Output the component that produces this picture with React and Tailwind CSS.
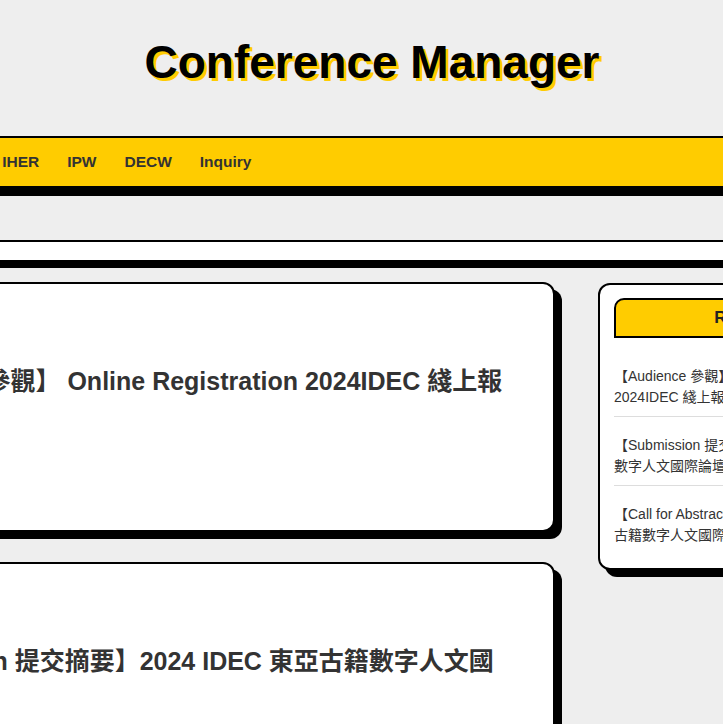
import React from "react";

// Navigation links of the top bar (the first two lie left of the visible area)
const navItems = ["Home", "IDEC", "IHER", "IPW", "DECW", "Inquiry"];

// Posts shown as big cards in the main column
const posts = [
  "【Audience 參觀】 Online Registration 2024IDEC 綫上報",
  "【Submission 提交摘要】2024 IDEC 東亞古籍數字人文國",
];

// Posts listed in the sidebar
const recentPosts = [
  "【Audience 參觀】 Online Registration 2024IDEC 綫上報名",
  "【Submission 提交摘要】2024 IDEC 東亞古籍數字人文國際論壇",
  "【Call for Abstracts 徵稿啟事】2024 IDEC 東亞古籍數字人文國際論壇",
];

const font = "font-['Liberation_Sans','Noto_Sans_CJK_TC',sans-serif]";

const App = () => {
  return (
    <div className={`min-h-screen overflow-hidden bg-[#eeeeee] ${font}`}>
      {/* Page is wider than the window, shifted left */}
      <div className="w-[1400px] ml-[-328px]">
        {/* Title */}
        <header className="pt-[36px] pb-[47px] text-center">
          <h1 className="text-[46px] leading-[53px] font-bold text-black [text-shadow:3px_3px_0_#ffcc00]">
            Conference Manager
          </h1>
        </header>

        {/* Navigation bar */}
        <nav className="h-[52px] flex items-center gap-[28px] pl-[192px] bg-[#ffcc00] border-2 border-black shadow-[0_8px_0_#000]">
          {navItems.map((item) => (
            <a
              key={item}
              href="#"
              className="text-[15.5px] font-bold text-[#333]"
            >
              {item}
            </a>
          ))}
        </nav>

        {/* Search bar */}
        <div className="mt-[52px] h-[22px] bg-white border-2 border-black shadow-[0_6px_0_#000]"></div>

        {/* Main content + sidebar */}
        <div className="mt-[20px] px-[134px] flex items-start gap-[43px]">
          {/* Post cards */}
          <div className="w-[749px] flex flex-col gap-[30px]">
            {posts.map((post) => (
              <div
                key={post}
                className="h-[250px] bg-white border-2 border-black rounded-[12px] shadow-[7px_7px_0_#000] pl-[33px] pt-[79px]"
              >
                <h2 className="text-[25px] leading-[36px] font-bold text-[#333] whitespace-nowrap">
                  {post}
                </h2>
              </div>
            ))}
          </div>

          {/* Sidebar */}
          <aside className="mt-[1px] w-[340px] bg-white border-2 border-black rounded-[12px] shadow-[7px_7px_0_#000] px-[14px] pt-[13px] pb-[14px]">
            <div className="h-[40px] flex items-center justify-center bg-[#ffcc00] border-2 border-black rounded-t-[10px]">
              <h3 className="text-[17px] font-bold text-[#222]">Recent Posts</h3>
            </div>
            <ul className="mt-[20px]">
              {recentPosts.map((post, i) => (
                <li
                  key={post}
                  className={`py-2 pr-[10px] text-[14px] leading-[21px] text-[#333] ${
                    i < recentPosts.length - 1
                      ? "mb-[10px] border-b border-[#dddddd]"
                      : ""
                  }`}
                >
                  {post}
                </li>
              ))}
            </ul>
          </aside>
        </div>
      </div>
    </div>
  );
};

export default App;
